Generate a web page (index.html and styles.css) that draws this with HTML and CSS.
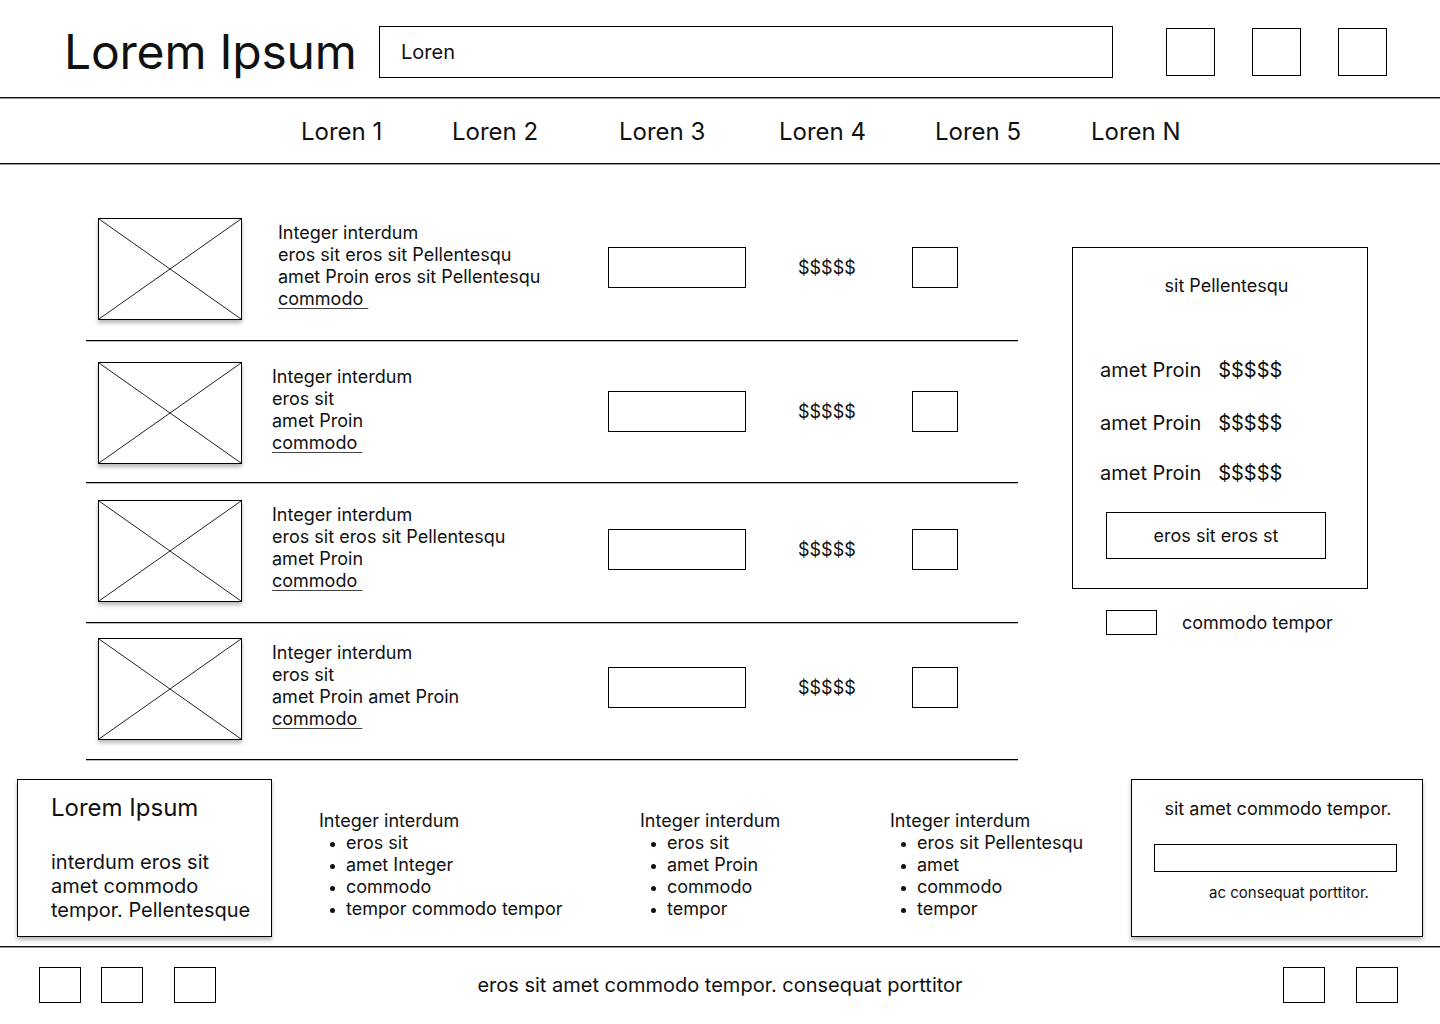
FILE: index.html
```html
<!DOCTYPE html>
<html lang="en">
<head>
  <meta charset="UTF-8">
  <title>Lorem Ipsum</title>
  <link rel="stylesheet" href="styles.css">
</head>
<body>

<header class="top">
  <div class="brand">Lorem Ipsum</div>
  <div class="search">Loren</div>
  <div class="tools">
    <span class="box tool"></span>
    <span class="box tool"></span>
    <span class="box tool"></span>
  </div>
</header>
<div class="rule"></div>
<nav class="menu">
  <a>Loren 1</a>
  <a>Loren 2</a>
  <a>Loren 3</a>
  <a>Loren 4</a>
  <a>Loren 5</a>
  <a>Loren N</a>
</nav>
<div class="rule"></div>

<main class="content">
  <section class="cart">
    <div class="item first">
      <div class="thumb"><svg viewBox="0 0 100 100" preserveAspectRatio="none"><line x1="0" y1="0" x2="100" y2="100"/><line x1="100" y1="0" x2="0" y2="100"/></svg></div>
      <div class="desc">
        <p>Integer interdum</p>
        <p>eros sit eros sit Pellentesqu</p>
        <p>amet Proin eros sit Pellentesqu</p>
        <p><u>commodo&nbsp;</u></p>
      </div>
      <div class="box qty"></div>
      <div class="price">$$$$$</div>
      <div class="box del"></div>
    </div>
    <div class="item second">
      <div class="thumb"><svg viewBox="0 0 100 100" preserveAspectRatio="none"><line x1="0" y1="0" x2="100" y2="100"/><line x1="100" y1="0" x2="0" y2="100"/></svg></div>
      <div class="desc">
        <p>Integer interdum</p>
        <p>eros sit</p>
        <p>amet Proin</p>
        <p><u>commodo&nbsp;</u></p>
      </div>
      <div class="box qty"></div>
      <div class="price">$$$$$</div>
      <div class="box del"></div>
    </div>
    <div class="item third">
      <div class="thumb"><svg viewBox="0 0 100 100" preserveAspectRatio="none"><line x1="0" y1="0" x2="100" y2="100"/><line x1="100" y1="0" x2="0" y2="100"/></svg></div>
      <div class="desc">
        <p>Integer interdum</p>
        <p>eros sit eros sit Pellentesqu</p>
        <p>amet Proin</p>
        <p><u>commodo&nbsp;</u></p>
      </div>
      <div class="box qty"></div>
      <div class="price">$$$$$</div>
      <div class="box del"></div>
    </div>
    <div class="item fourth">
      <div class="thumb"><svg viewBox="0 0 100 100" preserveAspectRatio="none"><line x1="0" y1="0" x2="100" y2="100"/><line x1="100" y1="0" x2="0" y2="100"/></svg></div>
      <div class="desc">
        <p>Integer interdum</p>
        <p>eros sit</p>
        <p>amet Proin amet Proin</p>
        <p><u>commodo&nbsp;</u></p>
      </div>
      <div class="box qty"></div>
      <div class="price">$$$$$</div>
      <div class="box del"></div>
    </div>
  </section>

  <aside class="side">
    <div class="summary">
      <p class="sumTitle">sit Pellentesqu</p>
      <p class="sumRow"><span>amet Proin</span><span>$$$$$</span></p>
      <p class="sumRow"><span>amet Proin</span><span>$$$$$</span></p>
      <p class="sumRow"><span>amet Proin</span><span>$$$$$</span></p>
      <div class="box btn">eros sit eros st</div>
    </div>
    <div class="check">
      <span class="box tick"></span>
      <span>commodo tempor</span>
    </div>
  </aside>
</main>

<section class="foot">
  <div class="card about">
    <p class="aboutTitle">Lorem Ipsum</p>
    <p class="aboutText">interdum eros sit<br>amet commodo<br>tempor. Pellentesque</p>
  </div>
  <div class="links one">
    <p>Integer interdum</p>
    <ul>
      <li>eros sit</li>
      <li>amet Integer</li>
      <li>commodo</li>
      <li>tempor commodo tempor</li>
    </ul>
  </div>
  <div class="links two">
    <p>Integer interdum</p>
    <ul>
      <li>eros sit</li>
      <li>amet Proin</li>
      <li>commodo</li>
      <li>tempor</li>
    </ul>
  </div>
  <div class="links three">
    <p>Integer interdum</p>
    <ul>
      <li>eros sit Pellentesqu</li>
      <li>amet</li>
      <li>commodo</li>
      <li>tempor</li>
    </ul>
  </div>
  <div class="card news">
    <p class="newsTitle">sit amet commodo tempor.</p>
    <div class="box mail"></div>
    <p class="newsNote">ac consequat porttitor.</p>
  </div>
</section>
<div class="rule"></div>

<footer class="bottom">
  <div class="social">
    <span class="box mini"></span>
    <span class="box mini"></span>
    <span class="box mini gapL"></span>
  </div>
  <p class="copy">eros sit amet commodo tempor. consequat porttitor</p>
  <div class="apps">
    <span class="box mini"></span>
    <span class="box mini"></span>
  </div>
</footer>

</body>
</html>
```

FILE: styles.css
```css
* {box-sizing: border-box;}
body {margin: 0; background: #fff; color: #111; font-family: Inter, "Noto Sans", sans-serif; width: 1440px; overflow: hidden;}
p {margin: 0;}
a {color: inherit; text-decoration: none;}

.box {border: 1px solid #000; background: #fff; display: block;}
.rule {height: 2px; border-top: 1px solid #111; border-bottom: 1px solid #9a9a9a;}

/* header */
.top {height: 97px; display: flex; align-items: center; padding: 6px 0 0 64px;}
.brand {width: 315px; font-size: 48px; line-height: 56px; font-weight: 400; letter-spacing: -0.2px;}
.search {width: 734px; height: 52px; border: 1px solid #000; display: flex; align-items: center; padding-left: 21px; font-size: 20px;}
.tools {display: flex; gap: 37px; margin-left: 53px;}
.tool {width: 49px; height: 48px;}

.menu {height: 64px; display: grid; grid-template-columns: 151px 167px 160px 156px 156px auto; align-items: center; padding-left: 301px; font-size: 24px;}

/* cart */
.content {display: flex; align-items: flex-start; padding: 34px 0 0 86px;}
.cart {width: 932px;}
.item {display: grid; grid-template-columns: 174px 336px 190px 114px 46px; align-items: center; padding: 19px 0 18px 12px; border-bottom: 1px solid #000; box-shadow: 0 1px 0 #bbb;}
.item.first {padding: 19px 0 20px 12px;}
.item.first .desc {padding-left: 6px;}
.item.second {padding: 21px 0 18px 12px;}
.item.third {padding: 17px 0 20px 12px;}
.item.fourth {padding: 15px 0 19px 12px;}
.thumb {width: 144px; height: 102px; border: 1px solid #000; box-shadow: 0 3px 4px rgba(0,0,0,0.28);}
.thumb svg {display: block; width: 100%; height: 100%;}
.thumb line {stroke: #222; stroke-width: 1; vector-effect: non-scaling-stroke;}
.desc {font-size: 18px; line-height: 22px; margin-top: -6px;}
.desc u {text-decoration-color: #444; text-underline-offset: 3px;}
.qty {width: 138px; height: 41px; margin-top: -4px;}
.price {font-size: 18px; margin-top: -4px;}
.del {width: 46px; height: 41px; margin-top: -4px;}

/* side */
.side {margin: 48px 0 0 54px;}
.summary {width: 296px; height: 342px; border: 1px solid #000; padding: 27px 0 0 27px;}
.sumTitle {font-size: 18px; line-height: 22px; text-align: center; padding-right: 14px;}
.sumRow {display: flex; gap: 17px; font-size: 20px; line-height: 26px; margin-top: 25px;}
.sumRow:nth-of-type(2) {margin-top: 60px;}
.sumRow:nth-of-type(3) {margin-top: 27px;}
.sumRow:nth-of-type(4) {margin-top: 24px;}
.btn {width: 220px; height: 47px; margin: 26px 0 0 6px; display: flex; align-items: center; justify-content: center; font-size: 18px;}
.check {display: flex; align-items: center; gap: 25px; padding: 21px 0 0 34px; font-size: 18px;}
.tick {width: 51px; height: 25px;}

/* foot */
.foot {display: flex; align-items: flex-start; padding: 19px 0 9px 17px;}
.card {height: 158px; border: 1px solid #000; box-shadow: 0 3px 4px rgba(0,0,0,0.28);}
.about {width: 255px; padding: 13px 0 0 33px;}
.aboutTitle {font-size: 24px; line-height: 30px;}
.aboutText {font-size: 20px; line-height: 24px; margin-top: 27px;}
.links {padding-top: 31px; font-size: 18px; line-height: 22px;}
.links ul {margin: 0; padding-left: 27px;}
.links li::marker {font-size: 14px;}
.one {width: 321px; margin-left: 47px;}
.two {width: 250px;}
.three {width: 241px;}
.news {width: 292px; padding: 18px 0 0 22px;}
.newsTitle {font-size: 18px; line-height: 22px; text-align: center; padding-right: 20px;}
.mail {width: 243px; height: 28px; margin-top: 24px;}
.newsNote {font-size: 15px; line-height: 18px; text-align: center; margin-top: 12px; padding-left: 2px;}

.bottom {height: 77px; display: grid; grid-template-columns: 1fr auto 1fr; align-items: center; padding-bottom: 4px;}
.social {display: flex; gap: 20px; padding-left: 39px;}
.social .gapL {margin-left: 11px;}
.mini {width: 42px; height: 36px;}
.copy {font-size: 20px;}
.apps {display: flex; gap: 31px; justify-content: flex-end; padding-right: 42px;}
```
